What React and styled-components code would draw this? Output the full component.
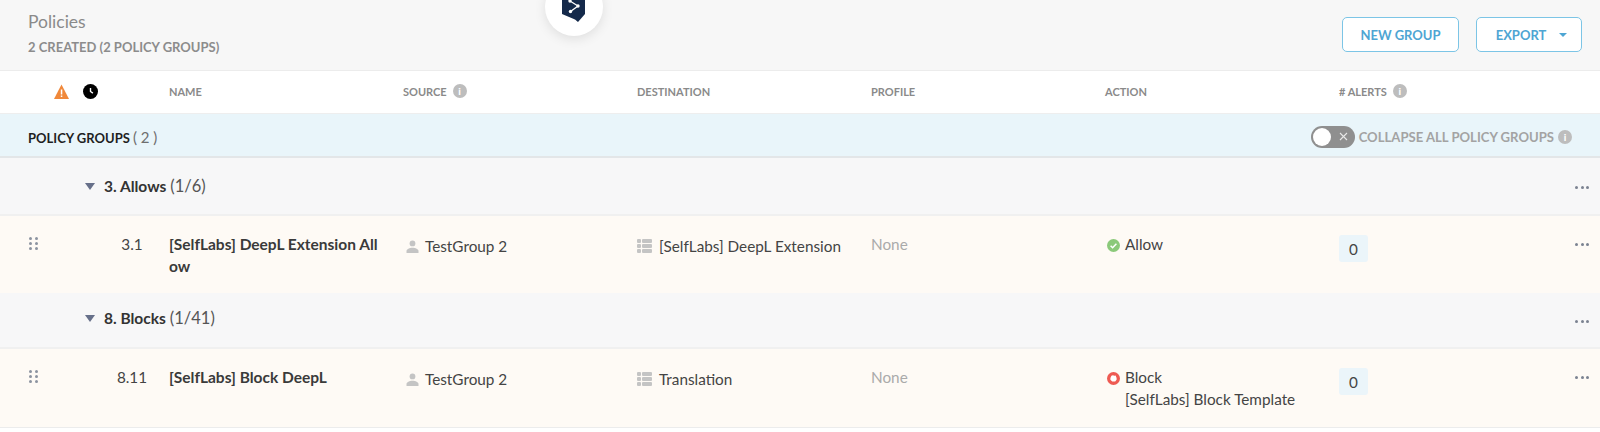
import React from "react";
import styled, { createGlobalStyle } from "styled-components";

const Global = createGlobalStyle`
  html, body { margin: 0; padding: 0; background: #fff; overflow: hidden; }
  body { font-family: Lato, "Open Sans", sans-serif; color: #3f3f3f; }
`;

const Page = styled.div`
  position: relative;
  width: 1600px;
  height: 432px;
  overflow: hidden;
`;

const LogoBubble = styled.div`
  position: absolute;
  left: 545px;
  top: -22px;
  width: 58px;
  height: 58px;
  box-sizing: border-box;
  border-radius: 50%;
  background: #fff;
  box-shadow: 0 3px 12px rgba(0, 0, 0, 0.1);
  display: flex;
  align-items: flex-end;
  justify-content: center;
  padding-bottom: 14px;
`;

const Header = styled.header`
  height: 71px;
  box-sizing: border-box;
  background: #f7f7f7;
  border-bottom: 1px solid #ececec;
  padding: 11px 18px 0 28px;
  display: flex;
  justify-content: space-between;
`;

const Titles = styled.div`
  display: flex;
  flex-direction: column;
`;

const Title = styled.div`
  font-size: 17.5px;
  line-height: 22px;
  color: #8a8a8a;
`;

const Subtitle = styled.div`
  margin-top: 6px;
  font-size: 13px;
  line-height: 16px;
  font-weight: 700;
  color: #8c8c8c;
`;

const Actions = styled.div`
  display: flex;
  gap: 17px;
  padding-top: 6px;
`;

const OutlineButton = styled.button`
  width: ${(p) => p.$w}px;
  height: 35px;
  box-sizing: border-box;
  border: 1px solid #7cc5e6;
  border-radius: 5px;
  background: #fff;
  color: #4ea5d3;
  font-family: inherit;
  font-size: 13px;
  font-weight: 700;
  display: flex;
  align-items: center;
  justify-content: center;
  gap: 13px;
  padding: 0 0 0 ${(p) => p.$pl || 0}px;
`;

const Caret = styled.span`
  width: 0;
  height: 0;
  border-left: 4px solid transparent;
  border-right: 4px solid transparent;
  border-top: 4px solid ${(p) => p.$color || "#4ea5d3"};
`;

const ColumnGrid = styled.div`
  display: grid;
  grid-template-columns: 169px repeat(6, 234px) 1fr;
`;

const ColumnHeader = styled(ColumnGrid)`
  height: 43px;
  align-items: center;
  background: #fff;
  box-sizing: border-box;
  border-bottom: 1px solid #eeeeee;
  padding-bottom: 2px;
`;

const StatusIcons = styled.div`
  display: flex;
  align-items: center;
  gap: 14px;
  padding-left: 54px;
`;

const HeadCell = styled.div`
  display: flex;
  align-items: center;
  gap: 6px;
  font-size: 11px;
  font-weight: 700;
  color: #8a8a8a;
`;

const InfoDot = styled.span`
  width: 14px;
  height: 14px;
  border-radius: 50%;
  background: #bdbdbd;
  color: #fff;
  font-size: 10px;
  font-weight: 900;
  line-height: 14px;
  text-align: center;
  flex: none;
`;

const GroupsBand = styled.div`
  height: 44px;
  box-sizing: border-box;
  background: #e9f5fa;
  border-bottom: 2px solid #e3e6e8;
  padding: 3px 28px 0 28px;
  display: flex;
  align-items: center;
  justify-content: space-between;
`;

const BandTitle = styled.div`
  font-size: 13px;
  font-weight: 700;
  color: #1f1f1f;
  span {
    font-size: 15px;
    font-weight: 400;
    color: #6e6e6e;
  }
`;

const CollapseWrap = styled.div`
  display: flex;
  align-items: center;
  font-size: 13.1px;
  font-weight: 700;
  color: #a3a3a3;
  gap: 4px;
`;

const Toggle = styled.div`
  position: relative;
  width: 44px;
  height: 22px;
  box-sizing: border-box;
  border-radius: 11px;
  background: #8f8f8f;
  display: flex;
  align-items: center;
  justify-content: flex-end;
  padding-right: 7px;
`;

const Knob = styled.span`
  position: absolute;
  left: 2px;
  top: 2px;
  width: 18px;
  height: 18px;
  border-radius: 50%;
  background: #fff;
`;

const GroupRow = styled.div`
  height: ${(p) => p.$h}px;
  box-sizing: border-box;
  background: #f7f7f8;
  border-bottom: 2px solid #f0f0f0;
  padding: ${(p) => p.$pt}px 11px 0 85px;
  display: flex;
  justify-content: space-between;
  align-items: flex-start;
`;

const GroupLabel = styled.div`
  display: flex;
  align-items: center;
  font-size: 16.5px;
  line-height: 22px;
  color: #555;
  b {
    font-size: 15.5px;
    font-weight: 700;
    color: #333;
    margin-right: 4px;
  }
`;

const GroupCaret = styled(Caret)`
  border-left-width: 5.5px;
  border-right-width: 5.5px;
  border-top-width: 7px;
  margin-right: 9px;
`;

const More = styled.div`
  display: flex;
  gap: 2.5px;
  padding-top: ${(p) => p.$pt || 0}px;
`;

const MoreDot = styled.span`
  width: 3px;
  height: 3px;
  border-radius: 50%;
  background: #7b8291;
`;

const PolicyRow = styled(ColumnGrid)`
  height: ${(p) => p.$h}px;
  box-sizing: border-box;
  background: #fefaf5;
  border-bottom: ${(p) => (p.$last ? "1px solid #ececec" : "none")};
  font-size: 15.3px;
  line-height: 22px;
  color: #444;
`;

const LeadCell = styled.div`
  display: flex;
  justify-content: space-between;
  align-items: flex-start;
  padding: 17px 17px 0 29px;
`;

const Number = styled.span`
  width: 40px;
  text-align: center;
`;

const Grip = styled.div`
  display: grid;
  grid-template-columns: 3px 3px;
  gap: 2px 3px;
  padding-top: 4px;
`;

const GripDot = styled.span`
  width: 3px;
  height: 3px;
  border-radius: 50%;
  background: #8c93a0;
`;

const NameCell = styled.div`
  padding: 17px 18px 0 0;
  font-size: 15.5px;
  font-weight: 700;
  color: #3a3a3a;
  word-break: break-all;
`;

const IconCell = styled.div`
  padding-top: ${(p) => p.$pt}px;
  padding-left: ${(p) => p.$pl || 0}px;
  display: flex;
  align-items: flex-start;
  gap: ${(p) => p.$gap || 7}px;
  color: ${(p) => (p.$muted ? "#aaa" : "#444")};
  svg {
    flex: none;
    margin-top: ${(p) => p.$iconTop || 4}px;
  }
`;

const Stack = styled.div`
  display: flex;
  flex-direction: column;
`;

const AlertCell = styled.div`
  padding-top: 19px;
`;

const AlertBadge = styled.div`
  width: 29px;
  height: 27px;
  border-radius: 3px;
  background: #ebf5fa;
  display: flex;
  align-items: center;
  justify-content: center;
  font-size: 15.3px;
`;

const EndCell = styled.div`
  display: flex;
  justify-content: flex-end;
  padding: 27px 11px 0 0;
`;

const Filler = styled.div`
  height: 4px;
  background: #fff;
`;

const Logo = () => (
  <svg width="24" height="30" viewBox="0 0 24 30" aria-hidden="true">
    <path d="M0 0H23V22L16 30L13 27.5L0 22z" fill="#14294a" />
    <path d="M8 9L16 14L8.5 19.5" stroke="#fff" strokeWidth="1.3" fill="none" />
    <circle cx="8" cy="9" r="1.7" fill="#fff" />
    <circle cx="16" cy="14" r="1.7" fill="#fff" />
    <circle cx="8.5" cy="19.5" r="1.7" fill="#fff" />
  </svg>
);

const Warn = () => (
  <svg width="15" height="15" viewBox="0 0 15 15">
    <path d="M7.5 0.5L15 15H0z" fill="#f0883a" />
    <rect x="6.8" y="5.5" width="1.5" height="5" fill="#fff" />
    <rect x="6.8" y="11.5" width="1.5" height="1.5" fill="#fff" />
  </svg>
);

const Clock = () => (
  <svg width="15" height="15" viewBox="0 0 15 15">
    <circle cx="7.5" cy="7.5" r="7.5" fill="#000" />
    <path d="M7.5 4V7.5l2.4 1.6" stroke="#fff" strokeWidth="1.4" fill="none" />
  </svg>
);

const Person = () => (
  <svg width="13" height="13" viewBox="0 0 13 13">
    <circle cx="6.5" cy="3.4" r="2.9" fill="#c4c4c4" />
    <path d="M0.5 13v-2c0-2 3-3.3 6-3.3s6 1.3 6 3.3v2z" fill="#c4c4c4" />
  </svg>
);

const ListIcon = () => (
  <svg width="15" height="14" viewBox="0 0 15 14">
    {[0, 5, 10].map((y) => (
      <g key={y} fill="#c4c4c4">
        <rect x="0" y={y} width="4" height="4" rx="1" />
        <rect x="5" y={y} width="10" height="4" rx="1" />
      </g>
    ))}
  </svg>
);

const AllowIcon = () => (
  <svg width="13" height="13" viewBox="0 0 13 13">
    <circle cx="6.5" cy="6.5" r="6.5" fill="#8bc97a" />
    <path d="M3.6 6.8l2 2 3.8-4" stroke="#fff" strokeWidth="1.5" fill="none" />
  </svg>
);

const BlockIcon = () => (
  <svg width="13" height="13" viewBox="0 0 13 13">
    <circle cx="6.5" cy="6.5" r="6.5" fill="#ee5a52" />
    <path d="M3.4 6l1-2.2 1.5-.6 1.5.6 1.2-.2 1 2.4v1.8l-1.4 1.7H5.2L3.4 7.8z" fill="#fff" />
  </svg>
);

const CloseX = () => (
  <svg width="9" height="9" viewBox="0 0 9 9">
    <path d="M1 1l7 7M8 1l-7 7" stroke="#e8e8e8" strokeWidth="1.1" />
  </svg>
);

const Dots = ({ pt }) => (
  <More $pt={pt}>
    <MoreDot />
    <MoreDot />
    <MoreDot />
  </More>
);

const Head = ({ label, info }) => (
  <HeadCell>
    {label}
    {info && <InfoDot>i</InfoDot>}
  </HeadCell>
);

const Policy = ({ h, last, number, name, destination, actionIcon, action, template }) => (
  <PolicyRow $h={h} $last={last}>
    <LeadCell>
      <Grip>
        {Array.from({ length: 6 }, (_, i) => (
          <GripDot key={i} />
        ))}
      </Grip>
      <Number>{number}</Number>
    </LeadCell>
    <NameCell>{name}</NameCell>
    <IconCell $pt={19} $pl={3} $iconTop={5} $gap={6}>
      <Person />
      TestGroup 2
    </IconCell>
    <IconCell $pt={19}>
      <ListIcon />
      {destination}
    </IconCell>
    <IconCell $pt={17} $muted>
      None
    </IconCell>
    <IconCell $pt={17} $pl={2} $iconTop={6} $gap={5}>
      {actionIcon}
      <Stack>
        <span>{action}</span>
        {template && <span>{template}</span>}
      </Stack>
    </IconCell>
    <AlertCell>
      <AlertBadge>0</AlertBadge>
    </AlertCell>
    <EndCell>
      <Dots />
    </EndCell>
  </PolicyRow>
);

export default function App() {
  return (
    <Page>
      <Global />
      <LogoBubble>
        <Logo />
      </LogoBubble>
      <Header>
        <Titles>
          <Title>Policies</Title>
          <Subtitle>2 CREATED (2 POLICY GROUPS)</Subtitle>
        </Titles>
        <Actions>
          <OutlineButton $w={117}>NEW GROUP</OutlineButton>
          <OutlineButton $w={106} $pl={5}>
            EXPORT
            <Caret />
          </OutlineButton>
        </Actions>
      </Header>
      <ColumnHeader>
        <StatusIcons>
          <Warn />
          <Clock />
        </StatusIcons>
        <Head label="NAME" />
        <Head label="SOURCE" info />
        <Head label="DESTINATION" />
        <Head label="PROFILE" />
        <Head label="ACTION" />
        <Head label="# ALERTS" info />
      </ColumnHeader>
      <GroupsBand>
        <BandTitle>
          POLICY GROUPS <span>( 2 )</span>
        </BandTitle>
        <CollapseWrap>
          <Toggle>
            <Knob />
            <CloseX />
          </Toggle>
          COLLAPSE ALL POLICY GROUPS
          <InfoDot>i</InfoDot>
        </CollapseWrap>
      </GroupsBand>
      <GroupRow $h={58} $pt={17}>
        <GroupLabel>
          <GroupCaret $color="#67708a" />
          <b>3. Allows</b> (1/6)
        </GroupLabel>
        <Dots pt={11} />
      </GroupRow>
      <Policy
        h={77}
        number="3.1"
        name="[SelfLabs] DeepL Extension Allow"
        destination="[SelfLabs] DeepL Extension"
        actionIcon={<AllowIcon />}
        action="Allow"
      />
      <GroupRow $h={56} $pt={14}>
        <GroupLabel>
          <GroupCaret $color="#67708a" />
          <b>8. Blocks</b> (1/41)
        </GroupLabel>
        <Dots pt={13} />
      </GroupRow>
      <Policy
        h={79}
        last
        number="8.11"
        name="[SelfLabs] Block DeepL"
        destination="Translation"
        actionIcon={<BlockIcon />}
        action="Block"
        template="[SelfLabs] Block Template"
      />
      <Filler />
    </Page>
  );
}
